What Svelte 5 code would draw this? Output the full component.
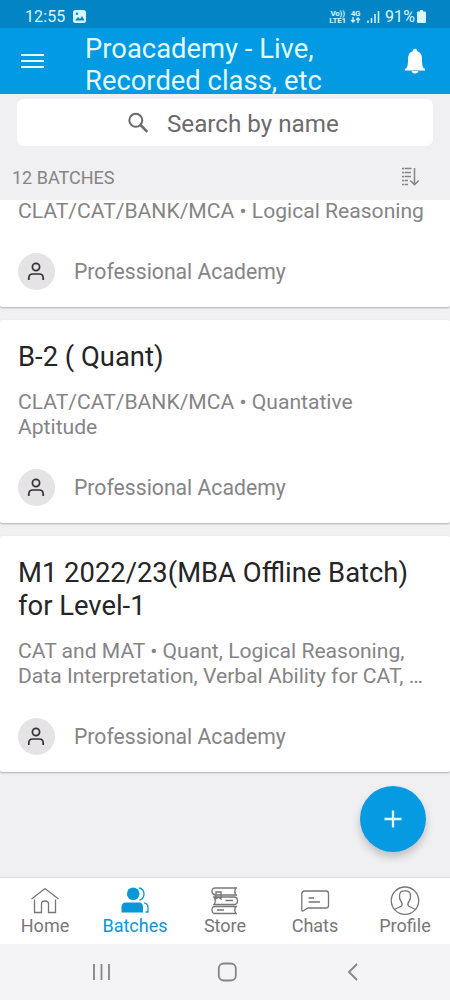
<script>
  const batches = [
    {
      id: 1,
      title: "",
      lines: ["CLAT/CAT/BANK/MCA • Logical Reasoning"],
      owner: "Professional Academy"
    },
    {
      id: 2,
      title: "B-2 ( Quant)",
      lines: ["CLAT/CAT/BANK/MCA • Quantative", "Aptitude"],
      owner: "Professional Academy"
    },
    {
      id: 3,
      title: "M1 2022/23(MBA Offline Batch) for Level-1",
      lines: [
        "CAT and MAT • Quant, Logical Reasoning,",
        "Data Interpretation, Verbal Ability for CAT, …"
      ],
      owner: "Professional Academy"
    }
  ];

  const tabs = ["Home", "Batches", "Store", "Chats", "Profile"];

  let active = "Batches";
</script>

<style>
  :global(body) {
    background: #f0eff1;
  }

  * {
    box-sizing: border-box;
  }

  svg {
    display: block;
    fill: none;
    stroke: currentColor;
  }

  button {
    padding: 0;
    border: 0;
    background: none;
    color: inherit;
    font: inherit;
  }

  .app {
    display: flex;
    flex-direction: column;
    width: 450px;
    height: 1000px;
    overflow: hidden;
    font-family: Roboto, "Liberation Sans", sans-serif;
    color: #858486;
    background: #f0eff1;
  }

  .status {
    display: flex;
    align-items: center;
    flex: none;
    height: 28px;
    padding: 5px 24px 0 25px;
    color: #d9f6fd;
    background: #0284c5;
    font-size: 16px;
    letter-spacing: 0.1px;
  }

  .status .photo {
    margin-left: 8px;
  }

  .status .right {
    display: flex;
    align-items: center;
    margin-left: auto;
  }

  .network {
    font-size: 8px;
    font-weight: 700;
    line-height: 7px;
    letter-spacing: -0.2px;
    text-align: center;
  }

  .mobile {
    margin-left: 4px;
  }

  .signal {
    margin: 0 5px 0 6px;
  }

  .battery {
    margin-left: 2px;
  }

  .header {
    display: flex;
    align-items: center;
    flex: none;
    height: 66px;
    padding: 0 23px 0 21px;
    color: #e3f9ff;
    background: #029ae2;
  }

  .header h1 {
    flex: 1;
    margin: 8px 0 0 41px;
    font-size: 27.4px;
    font-weight: 400;
    line-height: 32px;
    white-space: nowrap;
  }

  .search {
    display: flex;
    align-items: center;
    flex: none;
    height: 47px;
    margin: 5px 17px 0;
    padding: 2px 0 0 110px;
    border-radius: 7px;
    color: #6b6a6c;
    background: #fff;
    font-size: 24.2px;
  }

  .search span {
    margin-left: 17px;
  }

  .count {
    display: flex;
    align-items: center;
    justify-content: space-between;
    flex: none;
    height: 54px;
    padding: 8px 31px 0 12px;
    font-size: 18px;
  }

  .list {
    flex: 1;
    overflow: hidden;
  }

  .card {
    margin-bottom: 12.5px;
    padding: 21.5px 18px 17px;
    border-radius: 2px;
    background: #fff;
    box-shadow: 0 1px 2px rgba(0, 0, 0, 0.28);
  }

  .card h2 {
    margin: 0 0 15px;
    color: #252426;
    font-size: 27.4px;
    font-weight: 400;
    line-height: 33px;
  }

  .card p {
    margin: 0;
    font-size: 21.1px;
    line-height: 25px;
    white-space: nowrap;
  }

  .owner {
    display: flex;
    align-items: center;
    margin-top: 30px;
    font-size: 21.2px;
  }

  .card.scrolled {
    padding-top: 0;
    border-radius: 0 0 2px 2px;
  }

  .card.scrolled p {
    line-height: 22px;
  }

  .card.scrolled .owner {
    margin-top: 31px;
  }

  .avatar {
    display: flex;
    align-items: center;
    justify-content: center;
    width: 37px;
    height: 37px;
    margin-right: 19px;
    padding-right: 1px;
    border-radius: 50%;
    color: #333;
    background: #e5e3e5;
  }

  .add {
    position: absolute;
    top: 786px;
    left: 360px;
    display: flex;
    align-items: center;
    justify-content: center;
    width: 66px;
    height: 66px;
    border-radius: 50%;
    color: #e9faff;
    background: #059ae1;
    box-shadow: 0 5px 9px rgba(0, 0, 0, 0.2);
  }

  .tabs {
    display: grid;
    grid-template-columns: repeat(5, 90px);
    flex: none;
    height: 67px;
    border-top: 1px solid #dcdbdd;
    background: #fff;
  }

  .tab {
    display: flex;
    flex-direction: column;
    align-items: center;
    padding-top: 8px;
    color: #777678;
    font-size: 18px;
    line-height: 20px;
  }

  .tab.active {
    color: #0b96d8;
  }

  .system {
    display: flex;
    align-items: center;
    flex: none;
    gap: 106px;
    height: 56px;
    padding: 0 0 1px 92px;
    color: #858486;
    background: #f4f3f5;
  }

  .back {
    margin-left: 4px;
  }
</style>

<div class="app">
  <div class="status">
    <span>12:55</span>
    <svg class="photo" width="13" height="13" viewBox="0 0 13 13">
      <rect width="13" height="13" rx="2.5" fill="currentColor" stroke="none" />
      <path d="M2 10.5 5 7l2 2 2-3 2.500 4.500Z" fill="#0284c5" stroke="none" />
      <circle cx="4" cy="3.800" r="1.200" fill="#0284c5" stroke="none" />
    </svg>
    <div class="right">
      <div class="network">Vo))<br />LTE1</div>
      <div class="network mobile">
        4G
        <svg width="11" height="6" viewBox="0 0 11 6" stroke-width="1.300">
          <path d="M3 0v5M1 3l2 2 2-2M8 6V1M6 3l2-2 2 2" />
        </svg>
      </div>
      <svg class="signal" width="13" height="13" viewBox="0 0 13 13" stroke-width="1.500">
        <path d="M1 13v-2.500M4.500 13V8" />
        <path d="M8 13V4M11.500 13V1" />
      </svg>
      <span>91%</span>
      <svg class="battery" width="9" height="13" viewBox="0 0 9 13">
        <path d="M3 0h3v1.500h2q1 0 1 1V12q0 1-1 1H1q-1 0-1-1V2.500q0-1 1-1h2Z" fill="currentColor" stroke="none" />
      </svg>
    </div>
  </div>

  <header class="header">
    <button aria-label="Menu">
      <svg width="23" height="16" viewBox="0 0 23 16" stroke-width="2">
        <path d="M0 2h23M0 8h23M0 14h23" />
      </svg>
    </button>
    <h1>Proacademy - Live,<br />Recorded class, etc</h1>
    <button aria-label="Notifications">
      <svg width="24" height="26" viewBox="0 0 24 26">
        <path d="M2 20.500h20v2H2zM8.500 23h7Q15 25.500 12 25.500T8.500 23ZM3 21Q5 18.500 5 14v-3q0-6.500 4.800-7.800V2.500Q10 .8 12 .8t2.200 1.700v.7Q19 4.500 19 11v3q0 4.500 2 7Z" fill="#fff" stroke="none" />
      </svg>
    </button>
  </header>

  <div class="search">
    <svg width="23" height="23" viewBox="0 0 23 23" stroke-width="2">
      <circle cx="8.800" cy="8.300" r="6.500" />
      <path d="m13.500 13 6.800 6.800" stroke-width="2.500" />
    </svg>
    <span>Search by name</span>
  </div>

  <div class="count">
    <span>12 BATCHES</span>
    <svg width="18" height="20" viewBox="0 0 18 20" stroke-width="1.500">
      <path d="M1 1.500h9.500M1 5.500h9M1 9.500h9M1 13.500h6M1 17.500h6" stroke-dasharray="2 .6 20" />
      <path d="M13.500 1v16.500M9.300 13.500l4.200 4.200 4.200-4.200" />
    </svg>
  </div>

  <div class="list">
    {#each batches as batch (batch.id)}
      <div class="card" class:scrolled={!batch.title}>
        {#if batch.title}
          <h2>{batch.title}</h2>
        {/if}
        {#each batch.lines as line}
          <p>{line}</p>
        {/each}
        <div class="owner">
          <span class="avatar">
            <svg width="18" height="20" viewBox="0 0 18 20" stroke-width="1.700">
              <circle cx="9" cy="5" r="3.600" />
              <path d="M1.800 18v-2q0-4 4-4h6.400q4 0 4 4v2" />
            </svg>
          </span>
          <span>{batch.owner}</span>
        </div>
      </div>
    {/each}
  </div>

  <button class="add" aria-label="Add batch">
    <svg width="18" height="18" viewBox="0 0 18 18" stroke-width="2.300">
      <path d="M9 .5v17M.5 9h17" />
    </svg>
  </button>

  <nav class="tabs">
    {#each tabs as tab}
      <button class="tab" class:active={tab === active} on:click={() => (active = tab)}>
        <svg width="30" height="30" viewBox="0 0 30 30" stroke-width="1.300">
          {#if tab === "Home"}
            <path d="M1.500 13 15 2.500 28.500 13M4.500 13.500v13h7V18q0-3 3.500-3t3.500 3v8.500h7v-13" />
          {:else if tab === "Batches"}
            <circle cx="13.200" cy="7.800" r="6.300" fill="currentColor" stroke="none" />
            <path d="M1.500 26.500V21q0-4.500 4.500-4.500h13q4 0 4 4.500v5.500Z" fill="currentColor" stroke="none" />
            <path d="M19 2q5 1 5 6t-4.500 6M24 16.800q4 .7 4 5V26h-2.500" />
          {:else if tab === "Store"}
            <path d="M27 2H5Q2 2 2 5.300T5 9h22M25.500 2q-1.500 3.500 0 7M6 6h5v7l-2.500-2L6 13ZM3 11h21q3.500 0 3.500 3.700T24 18.500H3M4.500 11q1.500 3.700 0 7.500M15.500 14.500H23M27 20.500H5q-3 0-3 3.500t3 3.500h22M25.500 20.500q-1.500 3.500 0 7M7 24h7" />
          {:else if tab === "Chats"}
            <path d="M5 5h21q2.500 0 2.500 2.500v12Q28.500 22 26 22H8l-5 3q-1.200.5-1.200-1V7.500Q2 5 5 5ZM8.500 12H14M8.500 16H20" />
          {:else}
            <circle cx="15" cy="14.700" r="13.700" />
            <path d="M4.500 23.500 11.500 20q1.500-2-.5-4.500-2-3-1.500-6Q9.500 4.800 15 4.800t5.500 4.700q.5 3-1.500 6-2 2.500-.5 4.500l7 3.500" />
          {/if}
        </svg>
        <span>{tab}</span>
      </button>
    {/each}
  </nav>

  <div class="system">
    <svg width="19" height="18" viewBox="0 0 19 18" stroke-width="1.800">
      <path d="M2 1v16M9.500 1v16M17 1v16" />
    </svg>
    <svg width="20" height="20" viewBox="0 0 20 20" stroke-width="1.800">
      <rect x="1.800" y="1.500" width="17" height="17" rx="5" />
    </svg>
    <svg class="back" width="11" height="18" viewBox="0 0 11 18" stroke-width="1.800">
      <path d="M10 1 2 9l8 8" />
    </svg>
  </div>
</div>
